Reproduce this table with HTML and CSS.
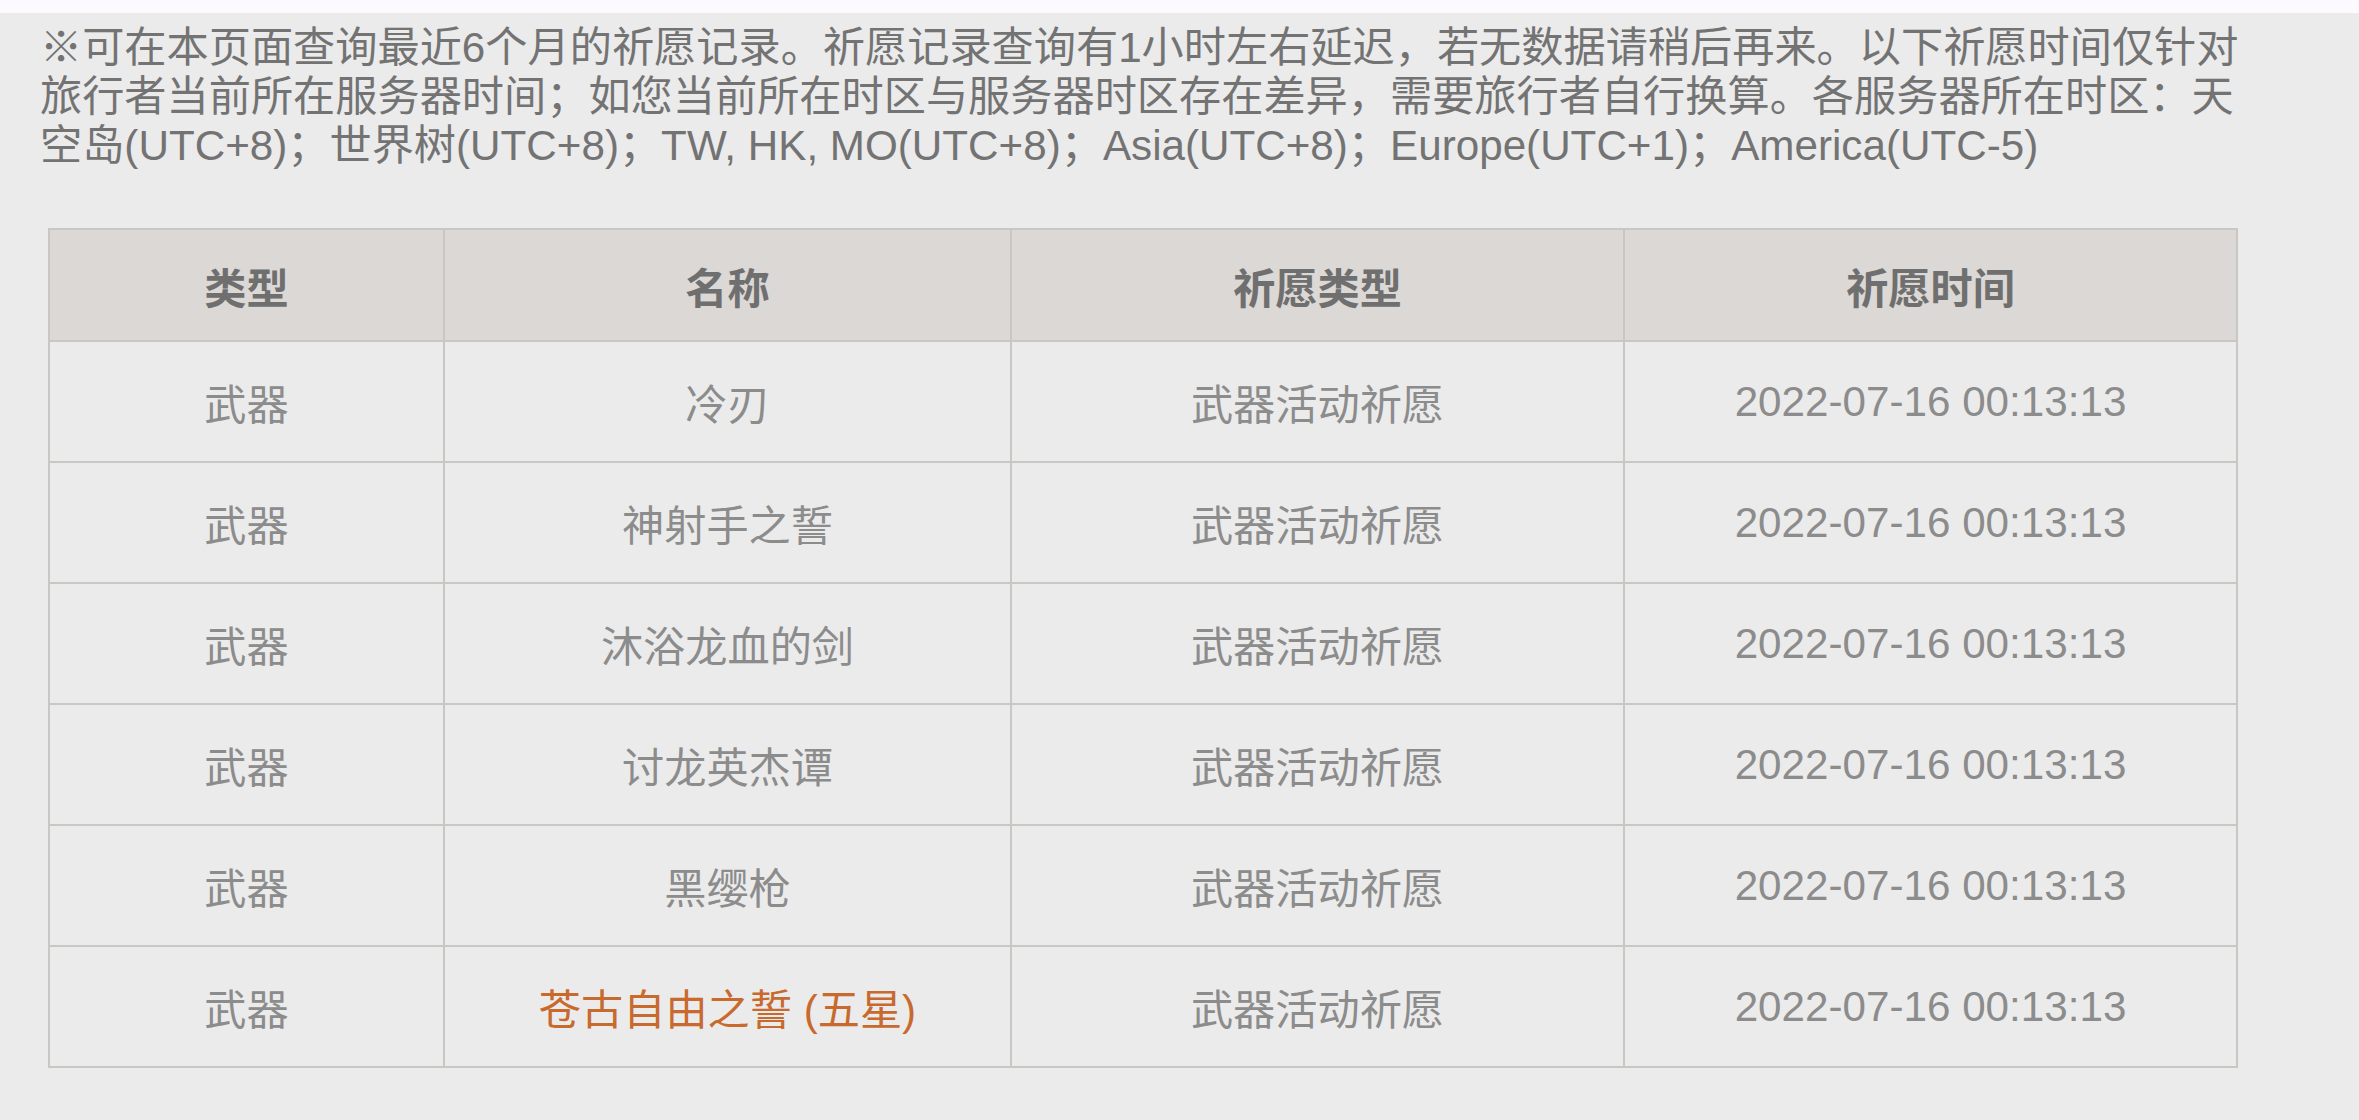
FILE: index.html
```html
<!DOCTYPE html>
<html lang="zh-CN">
<head>
<meta charset="utf-8">
<title>祈愿记录</title>
<link rel="stylesheet" href="styles.css">
</head>
<body>
<div class="topbar"></div>
<main class="content">
  <p class="notice">※可在本页面查询最近6个月的祈愿记录。祈愿记录查询有1小时左右延迟，若无数据请稍后再来。以下祈愿时间仅针对旅行者当前所在服务器时间；如您当前所在时区与服务器时区存在差异，需要旅行者自行换算。各服务器所在时区：天空岛(UTC+8)；世界树(UTC+8)；TW, HK, MO(UTC+8)；Asia(UTC+8)；Europe(UTC+1)；America(UTC-5)</p>
  <table class="log">
    <colgroup>
      <col class="c-type">
      <col class="c-name">
      <col class="c-gacha">
      <col class="c-time">
    </colgroup>
    <thead>
      <tr><th>类型</th><th>名称</th><th>祈愿类型</th><th>祈愿时间</th></tr>
    </thead>
    <tbody>
      <tr><td>武器</td><td>冷刃</td><td>武器活动祈愿</td><td>2022-07-16 00:13:13</td></tr>
      <tr><td>武器</td><td>神射手之誓</td><td>武器活动祈愿</td><td>2022-07-16 00:13:13</td></tr>
      <tr><td>武器</td><td>沐浴龙血的剑</td><td>武器活动祈愿</td><td>2022-07-16 00:13:13</td></tr>
      <tr><td>武器</td><td>讨龙英杰谭</td><td>武器活动祈愿</td><td>2022-07-16 00:13:13</td></tr>
      <tr><td>武器</td><td>黑缨枪</td><td>武器活动祈愿</td><td>2022-07-16 00:13:13</td></tr>
      <tr><td>武器</td><td class="star5">苍古自由之誓 (五星)</td><td>武器活动祈愿</td><td>2022-07-16 00:13:13</td></tr>
    </tbody>
  </table>
</main>
</body>
</html>
```
FILE: styles.css
```css
html, body {
  margin: 0;
  padding: 0;
}
body {
  background: #ebebeb;
  font-family: "Liberation Sans", "Noto Sans CJK SC", sans-serif;
  font-size: 42.2px;
  color: #7a7a7a;
  height: 1120px;
  overflow: hidden;
}
.topbar {
  height: 13px;
  background: #fcfaff;
}
.content {
  padding: 10px 0 0 40px;
  width: 2220px;
}
.notice {
  margin: 0;
  line-height: 49px;
  color: #737373;
}
.log {
  margin: 58px 0 0 8px;
  border-collapse: collapse;
  table-layout: fixed;
  width: 2188px;
}
.c-type { width: 395px; }
.c-name { width: 567px; }
.c-gacha { width: 613px; }
.c-time { width: 613px; }
.log th,
.log td {
  border: 2px solid #c9c7c3;
  text-align: center;
  vertical-align: middle;
  padding: 0;
}
.log th {
  background: #dbd8d5;
  color: #6f6f6f;
  font-weight: bold;
  height: 110px;
}
.log td {
  color: #8c8c8c;
  height: 119px;
}
.log td.star5 {
  color: #c8692e;
}
```
